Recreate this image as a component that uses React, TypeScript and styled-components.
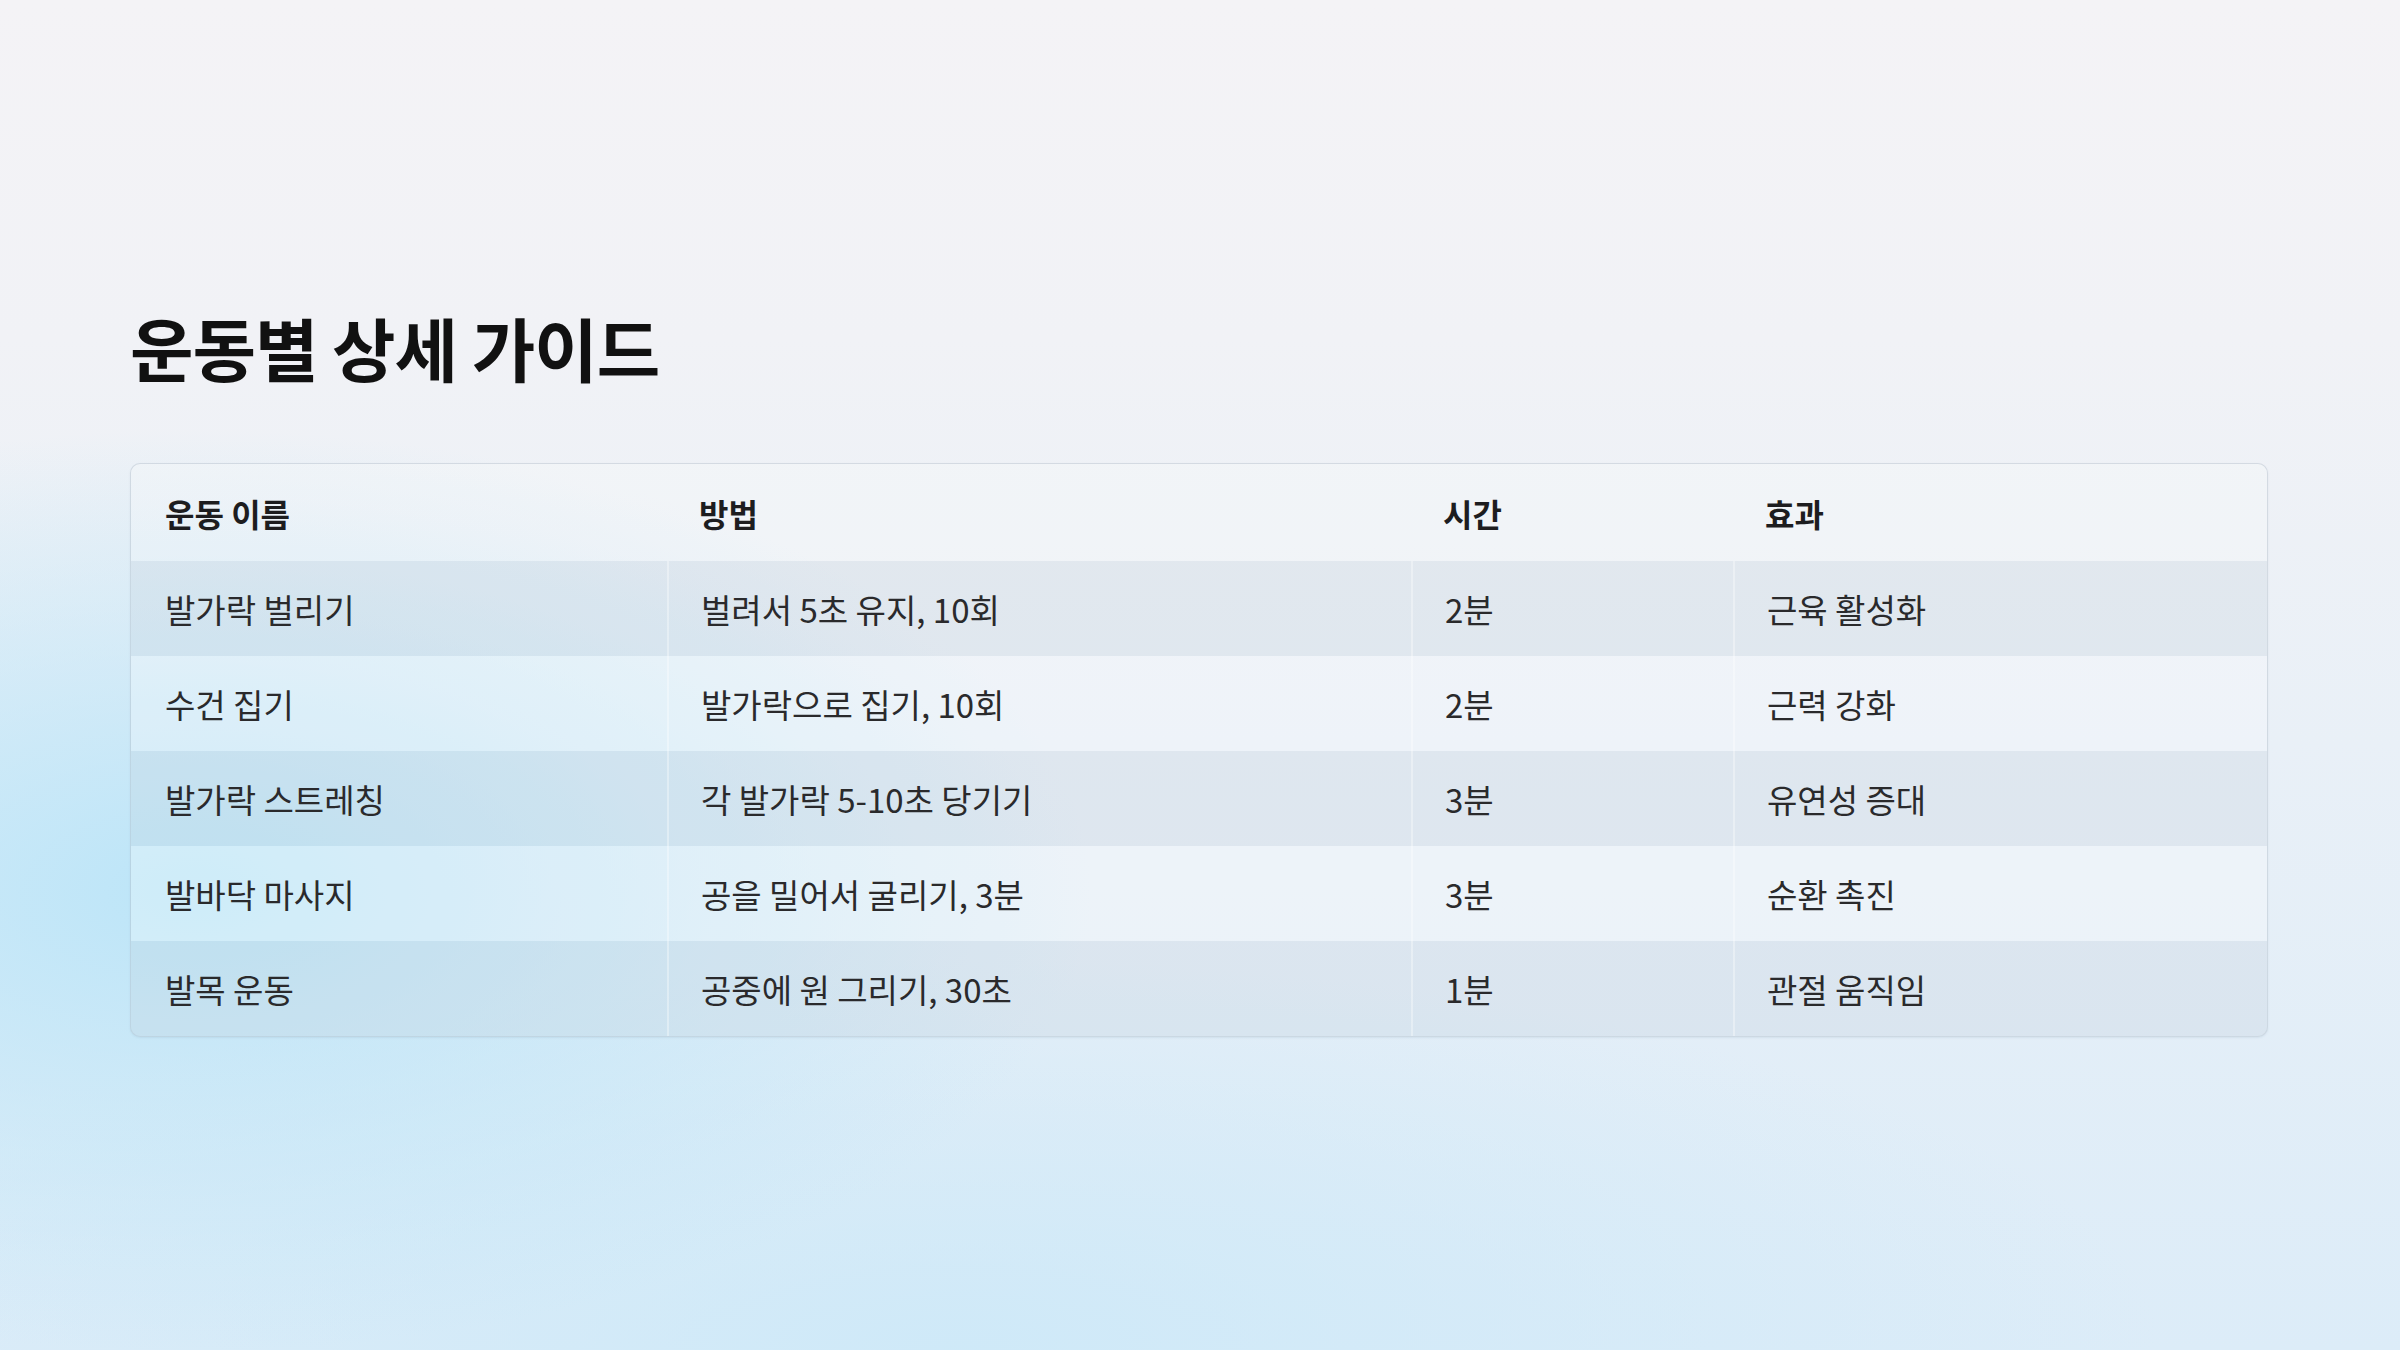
import React from "react";
import styled, { createGlobalStyle } from "styled-components";

const GlobalStyle = createGlobalStyle`
  html, body {
    margin: 0;
    padding: 0;
  }
  body {
    font-family: "Noto Sans CJK KR", "Noto Sans", sans-serif;
    color: #222;
  }
`;

const Page = styled.div`
  width: 2400px;
  height: 1350px;
  box-sizing: border-box;
  padding: 304px 132px 0 130px;
  background:
    radial-gradient(ellipse 1250px 640px at 8% 66%, rgba(188, 229, 248, 1), rgba(188, 229, 248, 0) 72%),
    radial-gradient(ellipse 1600px 520px at 40% 100%, rgba(206, 233, 248, 0.95), rgba(206, 233, 248, 0) 75%),
    linear-gradient(180deg, #f4f3f6 0%, #f1f2f6 25%, #e9f0f7 55%, #dcecf8 100%);
  overflow: hidden;
`;

const Title = styled.h1`
  margin: 0 0 73px;
  font-size: 69px;
  line-height: 86px;
  font-weight: 700;
  letter-spacing: -1px;
  color: #111;
`;

const Table = styled.div`
  border: 1px solid rgba(150, 165, 180, 0.32);
  border-radius: 10px;
  overflow: hidden;
  background: rgba(255, 255, 255, 0.16);
  box-shadow: 0 1px 2px rgba(80, 110, 140, 0.1);
`;

const Row = styled.div<{ $tone: "head" | "dark" | "light" }>`
  display: grid;
  grid-template-columns: 536px 744px 322px 1fr;
  height: ${(p) => (p.$tone === "head" ? "97px" : "95px")};
  background: ${(p) =>
    p.$tone === "dark"
      ? "rgba(120, 150, 175, 0.11)"
      : p.$tone === "light"
      ? "rgba(255, 255, 255, 0.14)"
      : "rgba(255, 255, 255, 0.1)"};
`;

const Cell = styled.div<{ $head?: boolean; $first?: boolean }>`
  display: flex;
  align-items: center;
  padding-left: ${(p) => (p.$first ? "34px" : "32px")};
  font-size: ${(p) => (p.$head ? "32px" : "33px")};
  font-weight: ${(p) => (p.$head ? 700 : 400)};
  color: ${(p) => (p.$head ? "#1d1d1f" : "#2a2a2c")};
  border-left: ${(p) =>
    p.$first || p.$head ? "none" : "2px solid rgba(255, 255, 255, 0.35)"};
`;

const headers = ["운동 이름", "방법", "시간", "효과"];

const rows = [
  ["발가락 벌리기", "벌려서 5초 유지, 10회", "2분", "근육 활성화"],
  ["수건 집기", "발가락으로 집기, 10회", "2분", "근력 강화"],
  ["발가락 스트레칭", "각 발가락 5-10초 당기기", "3분", "유연성 증대"],
  ["발바닥 마사지", "공을 밀어서 굴리기, 3분", "3분", "순환 촉진"],
  ["발목 운동", "공중에 원 그리기, 30초", "1분", "관절 움직임"],
];

export default function App() {
  return (
    <>
      <GlobalStyle />
      <Page>
        <Title>운동별 상세 가이드</Title>
        <Table>
          <Row $tone="head">
            {headers.map((h, i) => (
              <Cell key={h} $head $first={i === 0}>
                {h}
              </Cell>
            ))}
          </Row>
          {rows.map((r, ri) => (
            <Row key={r[0]} $tone={ri % 2 === 0 ? "dark" : "light"}>
              {r.map((c, ci) => (
                <Cell key={ci} $first={ci === 0}>
                  {c}
                </Cell>
              ))}
            </Row>
          ))}
        </Table>
      </Page>
    </>
  );
}
